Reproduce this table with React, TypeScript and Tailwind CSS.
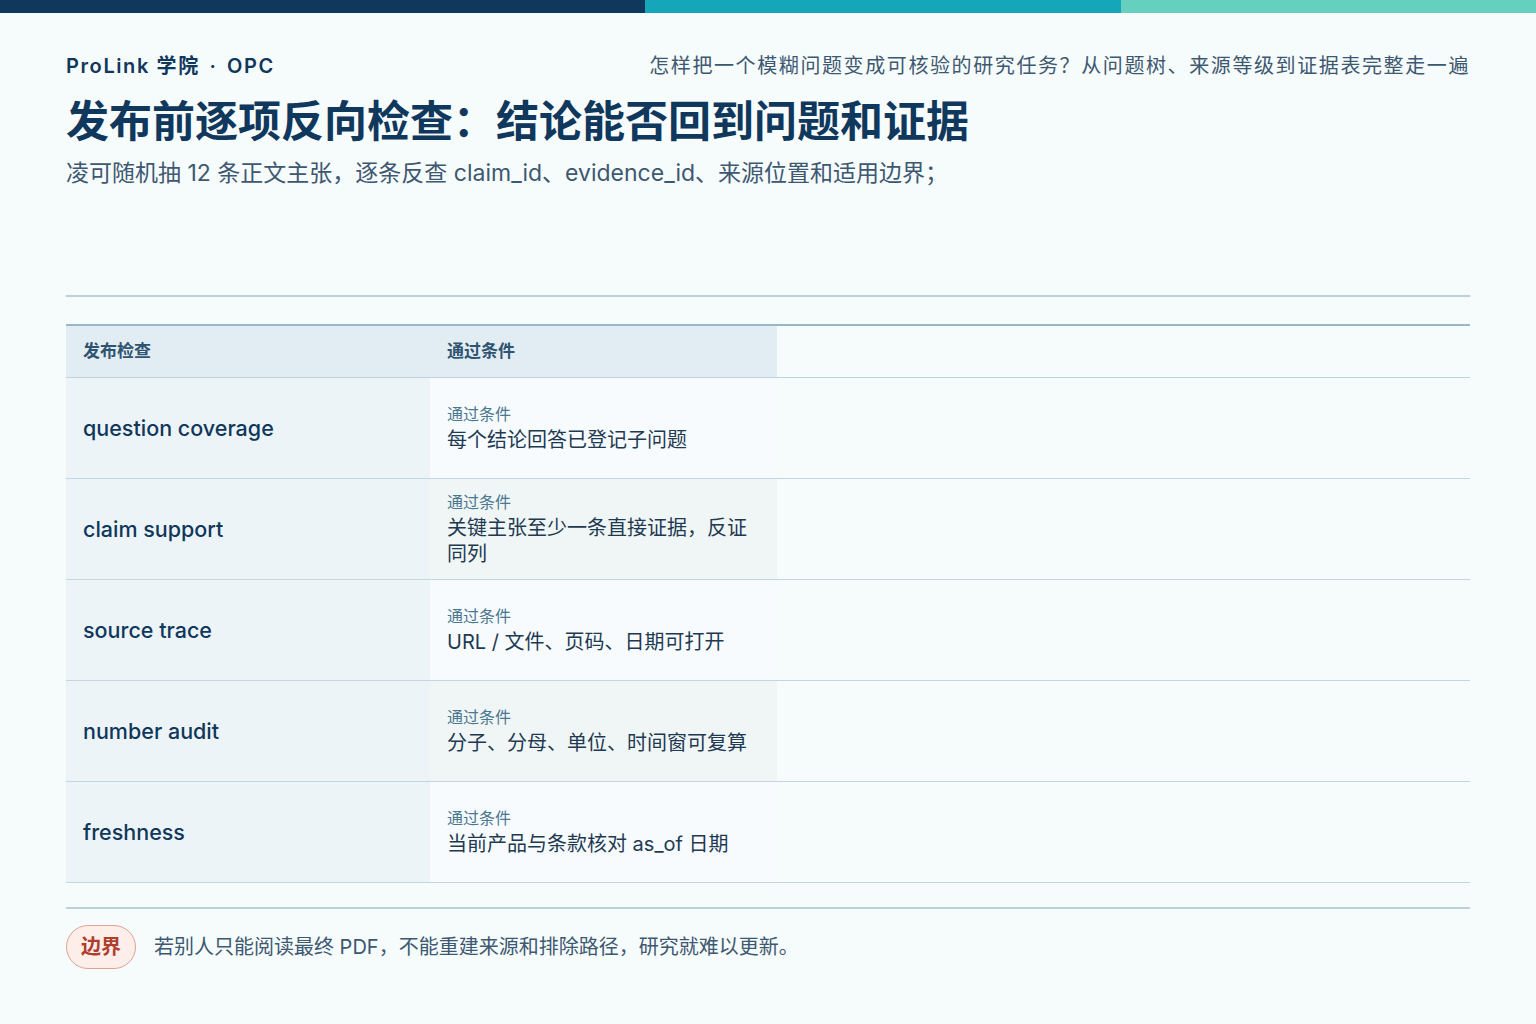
import React from "react";

const rows = [
  { k: "question coverage", v: "每个结论回答已登记子问题", alt: false },
  { k: "claim support", v: "关键主张至少一条直接证据，反证同列", alt: true },
  { k: "source trace", v: "URL / 文件、页码、日期可打开", alt: false },
  { k: "number audit", v: "分子、分母、单位、时间窗可复算", alt: true },
  { k: "freshness", v: "当前产品与条款核对 as_of 日期", alt: false },
];

export default function App() {
  return (
    <div
      className="w-[1536px] h-[1024px] bg-[#f6fbfc] flex flex-col overflow-hidden"
      style={{ fontFamily: "Inter, 'Noto Sans CJK SC', sans-serif" }}
    >
      <div className="flex h-[13px] shrink-0">
        <div className="w-[645px] bg-[#10375c]" />
        <div className="w-[476px] bg-[#16a6b9]" />
        <div className="flex-1 bg-[#66d0bf]" />
      </div>
      <div className="px-[66px] flex flex-col">
        <div className="mt-[41px] flex items-center justify-between h-[24px]">
          <div className="text-[20px] font-semibold tracking-[0.08em] text-[#10375c] leading-[24px]">
            ProLink 学院 <span className="mx-[3px]">·</span> OPC
          </div>
          <div className="text-[20px] tracking-[0.08em] text-[#3d5870] leading-[24px]">
            怎样把一个模糊问题变成可核验的研究任务？从问题树、来源等级到证据表完整走一遍
          </div>
        </div>
        <div className="mt-[16px] text-[43px] font-bold leading-[54px] text-[#10375c]">
          发布前逐项反向检查：结论能否回到问题和证据
        </div>
        <div className="mt-[10px] text-[23px] leading-[30px] text-[#3d5870]">
          凌可随机抽 12 条正文主张，逐条反查 claim_id、evidence_id、来源位置和适用边界；
        </div>
        <div className="mt-[107px] h-[2px] bg-[#bdd1dd]" />
        <div className="mt-[27px] border-t-2 border-[#98b8c9]">
          <div className="grid grid-cols-[364px_347px_1fr] h-[52px] border-b border-[#bfd3de]">
            <div className="bg-[#e2edf3] flex items-center px-[17px] text-[17px] font-semibold text-[#2f5370]">
              发布检查
            </div>
            <div className="bg-[#e2edf3] flex items-center px-[17px] text-[17px] font-semibold text-[#2f5370]">
              通过条件
            </div>
            <div />
          </div>
          {rows.map((r) => (
            <div
              key={r.k}
              className="grid grid-cols-[364px_347px_1fr] h-[101px] border-b border-[#c2d5e0]"
            >
              <div className="bg-[#edf4f7] flex items-center px-[17px] text-[21.5px] font-medium text-[#10375c]">
                {r.k}
              </div>
              <div
                className={
                  r.alt
                    ? "bg-[#f0f5f5] flex flex-col justify-center px-[17px]"
                    : "bg-[#f7fbfd] flex flex-col justify-center px-[17px]"
                }
              >
                <div className="text-[16px] leading-[20px] text-[#4b7891]">通过条件</div>
                <div className="mt-[3px] text-[20px] leading-[26px] text-[#1e3a52]">{r.v}</div>
              </div>
              <div />
            </div>
          ))}
        </div>
        <div className="mt-[24px] h-[2px] bg-[#bdd1dd]" />
        <div className="mt-[16px] flex items-center gap-[18px]">
          <div className="w-[70px] h-[44px] rounded-full border border-[#e2a193] bg-[#fdeeea] flex items-center justify-center text-[20px] font-semibold text-[#b03e2e]">
            边界
          </div>
          <div className="text-[20px] text-[#3d5870]">
            若别人只能阅读最终 PDF，不能重建来源和排除路径，研究就难以更新。
          </div>
        </div>
      </div>
    </div>
  );
}
